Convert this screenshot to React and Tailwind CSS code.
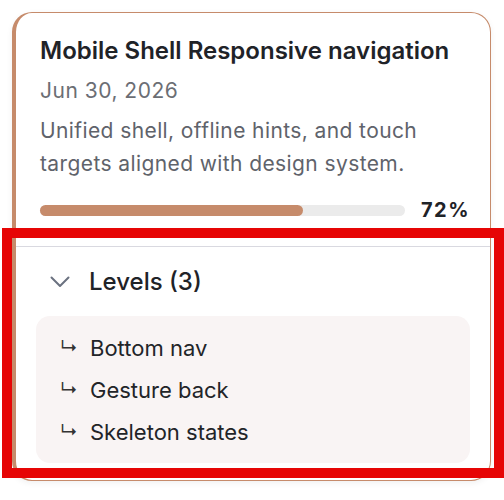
function Chevron() {
  return (
    <svg width="20" height="12" viewBox="0 0 20 12" fill="none" className="shrink-0">
      <polyline points="1.5,1.5 10,10 18.5,1.5" stroke="#6b7280" strokeWidth="2" strokeLinecap="round" strokeLinejoin="round" />
    </svg>
  );
}

const levels = ["Bottom nav", "Gesture back", "Skeleton states"];

export default function App() {
  return (
    <div className="relative w-[504px] h-[500px] bg-white p-3" style={{ fontFamily: "Inter, 'Noto Sans', sans-serif" }}>
      <div className="w-[479px] bg-white rounded-[20px] border border-l-4 border-[#c68b6b] shadow-[0_2px_6px_rgba(0,0,0,0.06)] overflow-hidden">
        <div className="pl-6 pr-5 pt-[23px] pb-[22px]">
          <h2 className="text-[24px] leading-[30px] font-semibold text-[#1f2328]">
            Mobile Shell Responsive navigation
          </h2>
          <p className="mt-[10px] text-[21px] leading-[30px] tracking-[0.5px] text-[#6b6e74]">Jun 30, 2026</p>
          <p className="mt-2 max-w-[400px] text-[21px] leading-[33px] tracking-[0.4px] text-[#5f636b]">
            Unified shell, offline hints, and touch targets aligned with design system.
          </p>
          <div className="mt-4 flex items-center gap-4 h-7">
            <div className="flex-1 h-[11px] rounded-full bg-[#ebebeb]">
              <div className="h-full rounded-full bg-[#c68b6b]" style={{ width: "72%" }} />
            </div>
            <span className="text-[20px] font-bold tracking-[1.5px] text-[#1f2328]">72%</span>
          </div>
        </div>
        <div className="border-t border-[#d9d9e0] px-5 pt-[19px] pb-[17px]">
          <div className="flex items-center gap-[19px] pl-[14px] h-8">
            <Chevron />
            <span className="text-[24px] leading-[32px] font-medium text-[#1f2328]">Levels (3)</span>
          </div>
          <div className="mt-[18px] rounded-[14px] bg-[#f9f4f4] pt-[18px] pb-[17px] px-6 flex flex-col gap-[14px]">
            {levels.map((l) => (
              <div key={l} className="flex items-center h-7 text-[22px] leading-[28px] text-[#222428]">
                <span className="w-[30px] text-[18px] text-[#333]">↳</span>
                <span>{l}</span>
              </div>
            ))}
          </div>
        </div>
      </div>
      <div className="absolute left-[2px] top-[228px] w-[502px] h-[250px] border-[10px] border-[#e60505] pointer-events-none" />
    </div>
  );
}
